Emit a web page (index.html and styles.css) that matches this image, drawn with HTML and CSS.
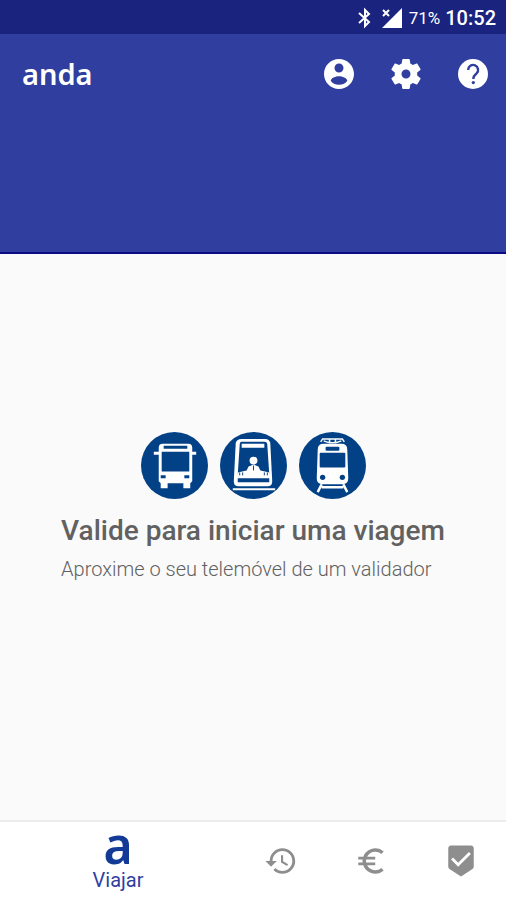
FILE: index.html
```html
<!DOCTYPE html>
<html lang="pt">
<head>
<meta charset="utf-8">
<meta name="viewport" content="width=device-width, initial-scale=1">
<title>anda</title>
<link rel="stylesheet" href="styles.css">
</head>
<body>
<div class="status">
  <svg class="status-bt" viewBox="0 0 16 22" aria-hidden="true"><path d="M2 6l10 9-4 4V3l4 4-10 9" fill="none" stroke="currentColor" stroke-width="2"/></svg>
  <svg class="status-signal" viewBox="0 0 22 20" aria-hidden="true"><path d="M21 0v20H1z" fill="currentColor"/><path d="M2 2l6 6M8 2L2 8" stroke="currentColor" stroke-width="2"/></svg>
  <span class="battery">71%</span>
  <span class="clock">10:52</span>
</div>
<header class="appbar">
  <div class="toolbar">
    <h1 class="brand">anda</h1>
    <button class="action" type="button" aria-label="Conta"><svg viewBox="0 0 24 24"><path d="M12 2C6.480 2 2 6.480 2 12s4.480 10 10 10 10-4.480 10-10S17.520 2 12 2zm0 3c1.660 0 3 1.340 3 3s-1.340 3-3 3-3-1.340-3-3 1.340-3 3-3zm0 14.200c-2.500 0-4.500-1.100-5.500-2.700.030-1.990 3.500-3.080 5.500-3.080 1.990 0 5.470 1.090 5.500 3.080-1 1.600-3 2.700-5.500 2.700z"/></svg></button>
    <button class="action" type="button" aria-label="Definições"><svg viewBox="0 0 24 24"><path d="M19.430 12.980c.04-.32.07-.64.07-.98s-.03-.66-.07-.98l2.110-1.650c.19-.15.24-.42.12-.64l-2-3.460c-.12-.22-.39-.3-.61-.22l-2.490 1c-.52-.4-1.080-.73-1.690-.98l-.38-2.650C14.460 2.180 14.250 2 14 2h-4c-.25 0-.46.18-.49.42l-.38 2.650c-.61.25-1.170.59-1.690.98l-2.490-1c-.23-.09-.49 0-.61.22l-2 3.460c-.13.22-.07.49.12.64l2.110 1.650c-.04.32-.07.65-.07.98s.03.66.07.98l-2.110 1.650c-.19.15-.24.42-.12.64l2 3.460c.12.22.39.3.61.22l2.490-1c.52.4 1.080.73 1.690.98l.38 2.650c.03.24.24.42.49.42h4c.25 0 .46-.18.49-.42l.38-2.650c.61-.25 1.170-.59 1.690-.98l2.490 1c.23.09.49 0 .61-.22l2-3.460c.12-.22.07-.49-.12-.64l-2.110-1.650zM12 15a3 3 0 1 1 0-6 3 3 0 0 1 0 6z"/></svg></button>
    <button class="action" type="button" aria-label="Ajuda"><svg viewBox="0 0 24 24"><circle cx="12" cy="12" r="10"/><path d="M8.800 9.300a3.300 3.300 0 1 1 5.600 2.300C13.100 12.700 12.200 13.300 12.200 15.300" fill="none" stroke="#303f9f" stroke-width="1.600"/><circle cx="12.200" cy="17.700" r="1.100" fill="#303f9f"/></svg></button>
  </div>
</header>
<main class="content">
  <div class="modes">
    <svg viewBox="0 0 68 68" role="img" aria-label="Autocarro">
      <circle cx="34" cy="34" r="34" fill="#034187"/>
      <path fill="#fff" d="M22 12h26q4 0 4 4v4h4v3h-4v27l-2 2v5h-7v-5H27v5h-7v-5l-2-2V23h-5v-3h5v-4q0-4 4-4z"/>
      <path fill="#034187" d="M23 14h24v3H23zM21 20h28v20H21zM20 44h5v3h-5zM44 44h5v3h-5z"/>
    </svg>
    <svg viewBox="0 0 68 68" role="img" aria-label="Metro">
      <circle cx="34" cy="34" r="34" fill="#034187"/>
      <path fill="#fff" d="M22 7h24q4 0 5 4l2 39q0 5-4 5H18q-4 0-4-5l2-39q1-4 6-4z"/>
      <path fill="#034187" d="M22 10h23q3 0 3 3l2 30H18l2-30q0-3 2-3zM18 47h32v4H18z"/>
      <path fill="#fff" d="M22 12h23v4H22zM18 41l9-2 2-4 5-2 5 2 2 4 9 2v4H18zM13 57h43v2H13z"/>
      <circle cx="34" cy="29" r="4" fill="#fff"/>
      <path stroke="#034187" d="M34 34v5M20 41v3M23 41v3M45 41v3M48 41v3"/>
    </svg>
    <svg viewBox="0 0 68 68" role="img" aria-label="Comboio">
      <circle cx="34" cy="34" r="34" fill="#034187"/>
      <path fill="none" stroke="#fff" stroke-width="1.500" d="M22 10l2-3h20l2 3M25 9q9 4 18 0M31 7v5M37 7v5"/>
      <path fill="#fff" d="M25 12h18q6 0 6 6l1 29q0 6-6 6H24q-6 0-6-6l1-29q0-6 6-6z"/>
      <rect x="27" y="15" width="14" height="4" rx="1" fill="#034187"/>
      <rect x="21" y="21" width="26" height="15" rx="1" fill="#034187"/>
      <circle cx="24" cy="46" r="2.700" fill="#034187"/><circle cx="44" cy="46" r="2.700" fill="#034187"/>
      <path stroke="#fff" stroke-width="2.500" d="M23 53l-4 8M45 53l4 8M23 56h22"/>
    </svg>
  </div>
  <div class="message">
    <h2 class="title">Valide para iniciar uma viagem</h2>
    <p class="hint">Aproxime o seu telemóvel de um validador</p>
  </div>
</main>
<nav class="tabs">
  <a class="tab tab-active" href="#viajar"><span class="tab-mark" aria-hidden="true">a</span><span class="tab-label">Viajar</span></a>
  <a class="tab" href="#historico" aria-label="Histórico"><svg viewBox="0 0 24 24"><path d="M13 3a9 9 0 0 0-9 9H1l3.890 3.890.07.14L9 12H6c0-3.870 3.130-7 7-7s7 3.130 7 7-3.130 7-7 7c-1.930 0-3.680-.79-4.940-2.060l-1.420 1.420A8.954 8.954 0 0 0 13 21a9 9 0 0 0 0-18zm-1 5v5l4.280 2.540.72-1.210-3.500-2.080V8H12z"/></svg></a>
  <a class="tab" href="#precos" aria-label="Preços"><svg viewBox="0 0 24 24"><path d="M15 18.500c-2.510 0-4.680-1.420-5.760-3.500H15v-2H8.580c-.05-.33-.08-.66-.08-1s.03-.67.08-1H15V9H9.240C10.320 6.920 12.500 5.500 15 5.500c1.610 0 3.090.59 4.230 1.570L21 5.300C19.410 3.870 17.300 3 15 3c-3.920 0-7.240 2.510-8.480 6H3v2h3.060c-.04.33-.06.66-.06 1s.02.67.06 1H3v2h3.520c1.240 3.490 4.560 6 8.480 6 2.310 0 4.410-.87 6-2.300l-1.780-1.770c-1.130.98-2.600 1.570-4.220 1.570z"/></svg></a>
  <a class="tab" href="#validacoes" aria-label="Validações"><svg viewBox="0 0 24 24"><path d="M19 1H5c-1.100 0-1.990.9-1.990 2L3 15.930c0 .69.35 1.300.88 1.660L12 23l8.110-5.410c.53-.36.88-.97.88-1.660L21 3c0-1.100-.9-2-2-2zm-9 15l-5-5 1.410-1.410L10 13.170l7.590-7.590L19 7l-9 9z"/></svg></a>
</nav>
</body>
</html>
```
FILE: styles.css
```css
* {
  box-sizing: border-box;
}

body {
  margin: 0;
  min-height: 100vh;
  display: flex;
  flex-direction: column;
  background: #fafafa;
  font-family: Roboto, "Liberation Sans", sans-serif;
}

h1, h2, p {
  margin: 0;
}

.status {
  display: flex;
  align-items: center;
  justify-content: flex-end;
  height: 34px;
  padding: 2px 10px 0;
  background: #1a237e;
  color: #fff;
}

.status-bt {
  width: 16px;
  height: 22px;
  margin-right: 8px;
}

.status-signal {
  width: 22px;
  height: 20px;
  margin-right: 6px;
}

.battery {
  margin-right: 5px;
  font-size: 17px;
}

.clock {
  font-size: 20px;
  font-weight: 500;
}

.appbar {
  height: 220px;
  background: #303f9f;
  border-bottom: 2px solid #0b0b86;
}

.toolbar {
  display: flex;
  align-items: center;
  height: 80px;
  padding-left: 22px;
  color: #fff;
}

.brand {
  flex: 1;
  font-family: "Noto Sans", sans-serif;
  font-size: 29px;
  line-height: 40px;
  font-weight: 600;
}

.action {
  display: grid;
  place-items: center;
  width: 67px;
  height: 67px;
  padding: 0;
  border: 0;
  background: none;
  color: inherit;
}

.action svg {
  width: 36px;
  height: 36px;
  fill: currentColor;
}

.content {
  flex: 1;
  display: flex;
  flex-direction: column;
  align-items: center;
  justify-content: center;
  padding-bottom: 60px;
}

.modes {
  display: flex;
  gap: 12px;
  margin-bottom: 14px;
}

.modes svg {
  width: 67px;
  height: 67px;
}

.title {
  color: #616161;
  font-size: 28px;
  line-height: 36px;
  font-weight: 500;
}

.hint {
  margin-top: 6px;
  color: #616161;
  font-size: 20px;
  line-height: 28px;
  font-weight: 300;
}

.tabs {
  display: grid;
  grid-template-columns: 1fr 90px 90px 90px;
  height: 80px;
  border-top: 2px solid #ededed;
  background: #fff;
}

.tab {
  display: flex;
  flex-direction: column;
  align-items: center;
  justify-content: center;
  color: #8e8e8e;
  text-decoration: none;
}

.tab svg {
  width: 34px;
  height: 34px;
  fill: currentColor;
}

.tab-active {
  justify-content: flex-end;
  padding-bottom: 8px;
  color: #123a96;
}

.tab-mark {
  font-family: "Noto Sans", sans-serif;
  font-size: 50px;
  line-height: 46px;
  font-weight: 600;
}

.tab-label {
  font-size: 20px;
  line-height: 24px;
  color: #303f9f;
}
```
